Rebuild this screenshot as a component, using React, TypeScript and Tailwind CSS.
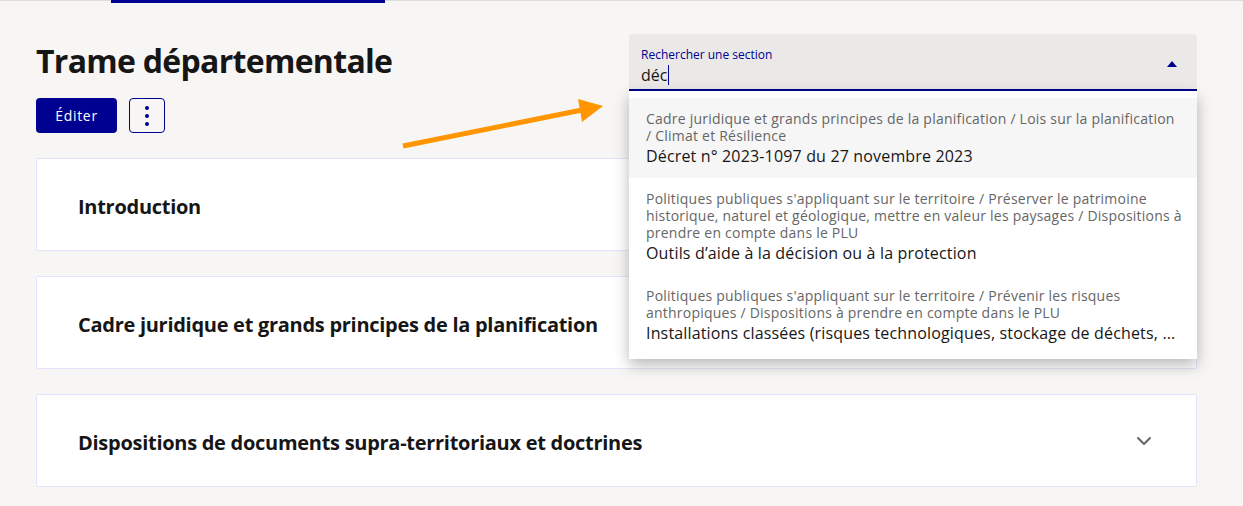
import { ChevronDown } from "lucide-react"

const results = [
  {
    path: ["Cadre juridique et grands principes de la planification / Lois sur la planification", "/ Climat et Résilience"],
    title: "Décret n° 2023-1097 du 27 novembre 2023",
    active: true,
  },
  {
    path: [
      "Politiques publiques s'appliquant sur le territoire / Préserver le patrimoine",
      "historique, naturel et géologique, mettre en valeur les paysages / Dispositions à",
      "prendre en compte dans le PLU",
    ],
    title: "Outils d’aide à la décision ou à la protection",
  },
  {
    path: [
      "Politiques publiques s'appliquant sur le territoire / Prévenir les risques",
      "anthropiques / Dispositions à prendre en compte dans le PLU",
    ],
    title: "Installations classées (risques technologiques, stockage de déchets, ...",
  },
]

const sections = [
  "Introduction",
  "Cadre juridique et grands principes de la planification",
  "Dispositions de documents supra-territoriaux et doctrines",
]

function SearchBox() {
  return (
    <div className="relative">
      <div className="rounded-t-[4px] border-b-2 border-[#000091] bg-[#eae9e7] pl-[12px] pr-[20px] pt-[13px] pb-[2px]">
        <div className="flex items-start justify-between">
          <div>
            <div className="text-[12px] leading-[16px] text-[#000091]">Rechercher une section</div>
            <div className="flex h-[24px] items-center text-[16px] leading-[24px] text-[#161616]">
              déc<span className="ml-px inline-block h-[20px] w-px bg-[#000091]" />
            </div>
          </div>
          <svg width="10" height="6" viewBox="0 0 10 6" className="mt-[14px]">
            <path d="M5 0L10 6H0z" fill="#000091" />
          </svg>
        </div>
      </div>
      <div className="absolute left-0 right-0 top-full z-10 bg-white pt-[7px] pb-[4px] shadow-[0_6px_14px_rgba(0,0,0,0.28)]">
        {results.map((r) => (
          <div key={r.title} className={`px-[17px] pt-[12px] pb-[10px] ${r.active ? "bg-[#f6f6f6]" : ""}`}>
            <div className="text-[14px] leading-[17px] tracking-[0.016em] text-[#666666]">
              {r.path.map((p) => (
                <div key={p} className="whitespace-nowrap">{p}</div>
              ))}
            </div>
            <div className="truncate text-[16px] leading-[24px] tracking-[0.01em] text-[#161616]">{r.title}</div>
          </div>
        ))}
      </div>
    </div>
  )
}

export default function App() {
  return (
    <div className="min-h-[506px] bg-[#f7f6f5] font-['Open_Sans',sans-serif] text-[#161616]">
      <div className="flex h-[3px]">
        <div className="w-[111px] border-t border-[#dddddd]" />
        <div className="w-[274px] bg-[#000091]" />
        <div className="flex-1 border-t border-[#dddddd]" />
      </div>
      <div className="relative px-[36px] pr-[46px]">
        <div className="grid grid-cols-2 gap-[25px]">
          <div className="pt-[38px]">
            <h1 className="text-[32px] font-bold leading-[40px] tracking-[-0.022em] text-[#161616]">Trame départementale</h1>
            <div className="mt-[17px] flex gap-[12px]">
              <button className="h-[35px] w-[81px] rounded-[4px] bg-[#000091] text-[14px] font-medium tracking-[0.05em] text-white">
                Éditer
              </button>
              <button className="flex h-[35px] w-[36px] flex-col items-center justify-center gap-[4px] rounded-[4px] border border-[#000091]">
                <span className="h-[4px] w-[4px] rounded-full bg-[#000091]" />
                <span className="h-[4px] w-[4px] rounded-full bg-[#000091]" />
                <span className="h-[4px] w-[4px] rounded-full bg-[#000091]" />
              </button>
            </div>
          </div>
          <div className="pt-[31px]">
            <SearchBox />
          </div>
        </div>
        <div className="mt-[25px] flex flex-col gap-[25px]">
          {sections.map((s) => (
            <div key={s} className="flex h-[93px] items-center justify-between rounded-[2px] border border-[#e3e3fd] bg-white pl-[41px] pr-[40px]">
              <span className="mt-[4px] text-[20px] font-bold tracking-[-0.014em] text-[#161616]">{s}</span>
              <ChevronDown className="h-[24px] w-[24px] text-[#666666]" strokeWidth={2} />
            </div>
          ))}
        </div>
        <svg className="pointer-events-none absolute left-0 top-0" width="640" height="160">
          <line x1="403" y1="143" x2="582" y2="107" stroke="#ff9500" strokeWidth="5" />
          <path d="M603 103L578 96L582 119z" fill="#ff9500" />
        </svg>
      </div>
    </div>
  )
}
